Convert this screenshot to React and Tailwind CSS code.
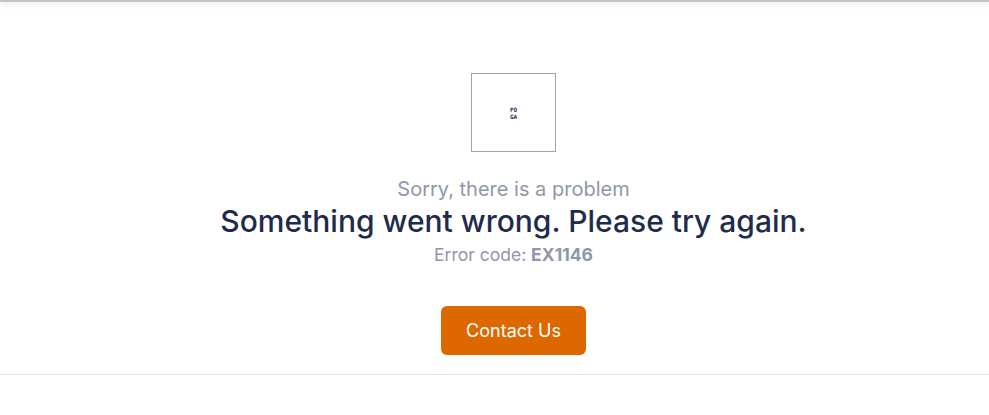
export default function App() {
  return (
    <div className="min-h-[415px] bg-white font-['Inter',sans-serif]">
      <div className="h-[2px] bg-[#c4c4c4] shadow-[0_2px_6px_rgba(0,0,0,0.18)]" />

      <div className="flex flex-col items-center pl-[38px] pt-[71px] pb-[19px] border-b border-[#e3e3e3]">
        <div className="w-[85px] h-[79px] border border-[#a0a4ad] flex items-center justify-center">
          <span className="flex flex-col font-['DejaVu_Sans_Mono',monospace] text-[6px] leading-[7px] font-bold text-[#1e2a4a] text-center">
            <span>FO</span>
            <span>GA</span>
          </span>
        </div>

        <p className="mt-[24px] text-[20px] leading-[26px] text-[#8f97aa]">
          Sorry, there is a problem
        </p>
        <h1 className="text-[30px] leading-[38px] font-medium text-[#1f2b4d]">
          Something went wrong. Please try again.
        </h1>
        <p className="mt-[4px] text-[17.5px] leading-[22px] text-[#8f97aa]">
          Error code: <span className="font-bold">EX1146</span>
        </p>

        <button className="mt-[40px] w-[145px] h-[49px] rounded-md bg-[#dd6800] text-white text-[18px]">
          Contact Us
        </button>
      </div>
    </div>
  );
}
